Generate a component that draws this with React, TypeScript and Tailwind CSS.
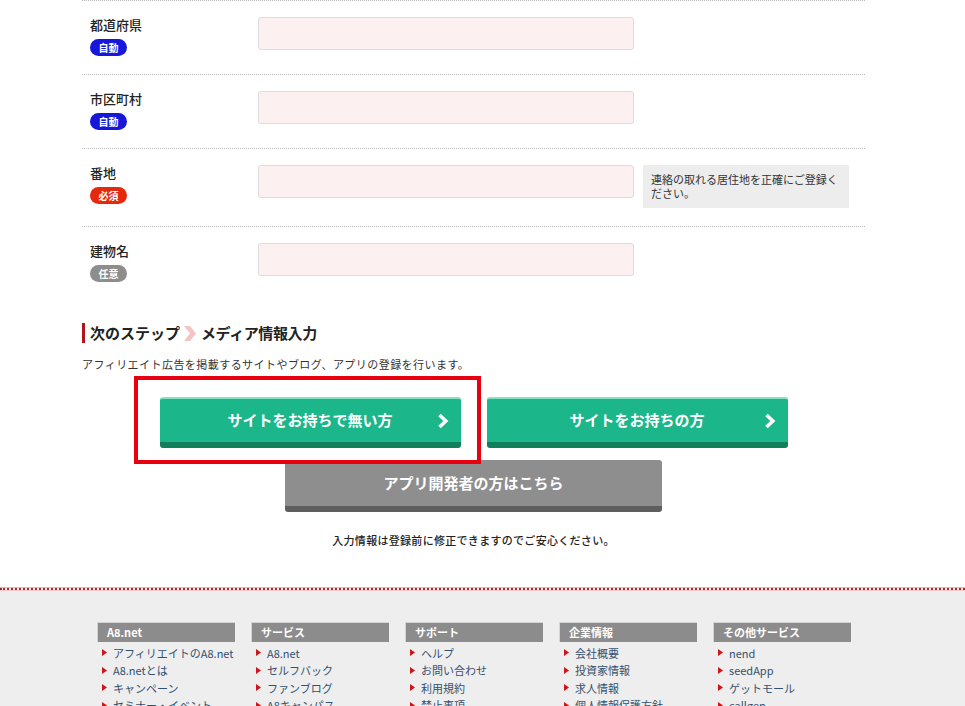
import React from "react";

type Row = { label: string; badge: "auto" | "req" | "opt"; help?: boolean };

const rows: Row[] = [
  { label: "都道府県", badge: "auto" },
  { label: "市区町村", badge: "auto" },
  { label: "番地", badge: "req", help: true },
  { label: "建物名", badge: "opt" },
];

function Badge({ kind }: { kind: Row["badge"] }) {
  if (kind === "auto")
    return (
      <span className="inline-flex h-[17px] w-[37px] items-center justify-center rounded-full bg-[#1717dc] text-[10px] font-bold leading-none text-white">
        自動
      </span>
    );
  if (kind === "req")
    return (
      <span className="inline-flex h-[17px] w-[37px] items-center justify-center rounded-full bg-[#e5290c] text-[10px] font-bold leading-none text-white">
        必須
      </span>
    );
  return (
    <span className="inline-flex h-[17px] w-[37px] items-center justify-center rounded-full bg-[#8d8d8d] text-[10px] font-bold leading-none text-white">
      任意
    </span>
  );
}

function Chevron() {
  return (
    <svg width="12" height="16" viewBox="0 0 12 16" className="absolute right-[12px] top-[14px]">
      <path d="M2.5 2 L8.8 8 L2.5 14" fill="none" stroke="#fff" strokeWidth="3.6" strokeLinejoin="miter" />
    </svg>
  );
}

const footerCols: { title: string; links: string[] }[] = [
  { title: "A8.net", links: ["アフィリエイトのA8.net", "A8.netとは", "キャンペーン", "セミナー・イベント", "A8.netの歩み"] },
  { title: "サービス", links: ["A8.net", "セルフバック", "ファンブログ", "A8キャンパス", "A8.net for Apps"] },
  { title: "サポート", links: ["ヘルプ", "お問い合わせ", "利用規約", "禁止事項", "サイトマップ"] },
  { title: "企業情報", links: ["会社概要", "投資家情報", "求人情報", "個人情報保護方針", "情報セキュリティ"] },
  { title: "その他サービス", links: ["nend", "seedApp", "ゲットモール", "callgen", "moba8.net"] },
];

export default function App() {
  return (
    <div className="relative h-[706px] w-[965px] overflow-hidden bg-white font-['Noto_Sans_CJK_JP','Noto_Sans',sans-serif] text-[#222]">
      <div className="ml-[82px] w-[783px]">
        {rows.map((r) => (
          <div
            key={r.label}
            className="flex items-start border-t border-dotted border-[#b8b8b8] pt-[15px] pb-[18px]"
          >
            <div className="w-[176px] pl-[8px]">
              <div className="h-[18px] text-[13px] font-medium leading-[18px] text-[#222]">{r.label}</div>
              <div className="mt-[5px] flex">
                <Badge kind={r.badge} />
              </div>
            </div>
            <div className="mt-[1px] h-[33px] w-[376px] rounded-[3px] border border-[#dcdcdc] bg-[#fdf0f0]" />
            {r.help && (
              <div className="ml-[9px] mt-[1px] flex h-[43px] w-[206px] flex-col bg-[#ededed] px-[8px] pt-[7px] text-[11px] leading-[14px] text-[#333]">
                <span className="whitespace-nowrap">連絡の取れる居住地を正確にご登録く</span>
                <span className="whitespace-nowrap">ださい。</span>
              </div>
            )}
          </div>
        ))}

        <div className="mt-[23px] flex h-[20px] items-center border-l-[3px] border-[#b3141c] pl-[5px] text-[15px] font-bold leading-[20px] text-[#222]">
          <span>次のステップ</span>
          <svg width="12" height="15" viewBox="0 0 12 15" className="ml-[4px] mr-[5px]">
            <polygon points="0,0 6,0 12,7.5 6,15 0,15 6,7.5" fill="#f4c3c3" />
          </svg>
          <span className="tracking-[-0.4px]">メディア情報入力</span>
        </div>

        <p className="mt-[13px] whitespace-nowrap text-[11px] leading-[16px] tracking-[0.45px] text-[#333]">
          アフィリエイト広告を掲載するサイトやブログ、アプリの登録を行います。
        </p>

        <div className="mt-[25px] flex justify-center gap-[26px]">
          <div className="relative flex h-[51px] w-[301px] items-center justify-center rounded-[3px] border-t-[2px] border-b-[6px] border-t-[#86e2c2] border-b-[#0f7f5c] bg-[#1bb68a] text-[15px] font-bold text-white">
            サイトをお持ちで無い方
            <Chevron />
          </div>
          <div className="relative flex h-[51px] w-[301px] items-center justify-center rounded-[3px] border-t-[2px] border-b-[6px] border-t-[#86e2c2] border-b-[#0f7f5c] bg-[#1bb68a] text-[15px] font-bold text-white">
            サイトをお持ちの方
            <Chevron />
          </div>
        </div>

        <div className="mt-[12px] flex justify-center">
          <div className="flex h-[52px] w-[377px] items-center justify-center rounded-[3px] border-b-[6px] border-b-[#5e5e5e] bg-[#8e8e8e] text-[15px] font-bold text-white">
            アプリ開発者の方はこちら
          </div>
        </div>

        <p className="mt-[20px] text-center text-[11px] font-medium leading-[16px] tracking-[0.3px] text-[#222]">
          入力情報は登録前に修正できますのでご安心ください。
        </p>
      </div>

      {/* annotation box */}
      <div className="pointer-events-none absolute left-[134px] top-[376px] h-[88px] w-[347px] border-[4px] border-[#e8000f]" />

      <footer className="mt-[39px] bg-[#eeeeee]">
        <div className="h-[1px] bg-[#f0b0b0]" />
        <div className="h-[2px] border-t-2 border-dotted border-[#a92828]" />
        <div className="h-[1px] bg-[#f4c8c8]" />
        <div className="ml-[97px] flex gap-[16px] pt-[31px]">
          {footerCols.map((c) => (
            <div key={c.title} className="w-[138px]">
              <div className="h-[20px] border-t border-l border-[#d4d4d4] bg-[#8c8c8c] pl-[9px] text-[11px] font-bold leading-[19px] text-white">
                {c.title}
              </div>
              <ul className="mt-[2px]">
                {c.links.map((l) => (
                  <li key={l} className="flex h-[17.5px] items-center whitespace-nowrap text-[11px] text-[#33506e]">
                    <svg width="6" height="7" viewBox="0 0 6 7" className="ml-[5px] mr-[5px] shrink-0">
                      <polygon points="0,0 5,3.5 0,7" fill="#d0141a" />
                    </svg>
                    <span>{l}</span>
                  </li>
                ))}
              </ul>
            </div>
          ))}
        </div>
        <div className="h-[40px]" />
      </footer>
    </div>
  );
}
